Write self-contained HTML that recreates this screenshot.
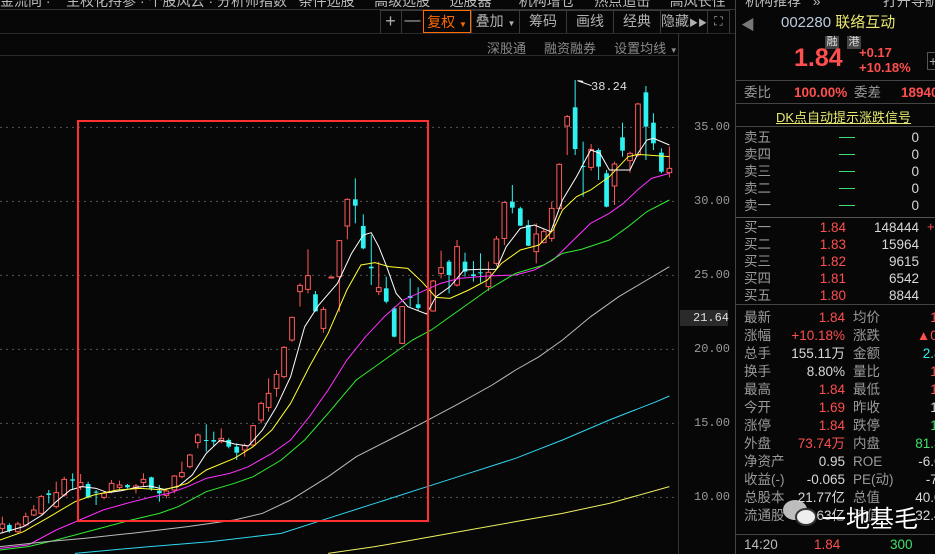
<!DOCTYPE html>
<html><head><meta charset="utf-8"><style>
*{margin:0;padding:0;box-sizing:border-box}
body{width:935px;height:554px;background:#070707;overflow:hidden;position:relative;font-family:"Liberation Sans","Noto Sans CJK SC",sans-serif;color:#a8a8a8}
.a{position:absolute;white-space:nowrap}
.btn{position:absolute;top:10px;height:23px;border-left:1px solid #3a3a3a;font-size:14px;color:#b0b0b0;text-align:center;line-height:22px;white-space:nowrap}
.r{color:#ff4f4f}.g{color:#3fe06b}.w{color:#d8d8d8}.c{color:#2ef2f2}
.row{position:absolute;left:744px;width:200px;font-size:13.5px;height:17px;line-height:17px;white-space:nowrap}
.row span{white-space:nowrap}
.lab{color:#9a9a9a}
</style></head><body>
<div class="a" style="left:0;top:-9px;font-size:14px;color:#bbb;word-spacing:0">金流向 ·&nbsp;&nbsp;&nbsp; 主权化持参 · 个股风云 · 分析师指数&nbsp;&nbsp; 条件选股&nbsp;&nbsp;&nbsp;&nbsp; 高级选股&nbsp;&nbsp;&nbsp;&nbsp; 选股器&nbsp;&nbsp;&nbsp;&nbsp;&nbsp;&nbsp; 机构增仓&nbsp;&nbsp;&nbsp;&nbsp; 热点追击&nbsp;&nbsp;&nbsp;&nbsp; 高风长性&nbsp;&nbsp;&nbsp;&nbsp; 机构推荐&nbsp;&nbsp; »&nbsp;&nbsp;&nbsp;&nbsp;&nbsp;&nbsp;&nbsp;&nbsp;&nbsp;&nbsp;&nbsp;&nbsp;&nbsp;&nbsp;&nbsp; 打开导航&nbsp;&nbsp; 返回</div>
<div class="a" style="left:0;top:9px;width:735px;height:1px;background:#333"></div>
<div class="a" style="left:380px;top:10px;width:350px;height:24px;border:1px solid #3a3a3a"></div>
<div class="btn" style="left:380px;width:21px;border:none;font-size:18px">+</div>
<div class="btn" style="left:401px;width:22px;font-size:16px">—</div>
<div class="btn" style="left:423px;width:48px;border:1px solid #ff6a00;color:#ff6a00">复权 <span style="font-size:8px">▼</span></div>
<div class="btn" style="left:471px;width:48px">叠加 <span style="font-size:8px">▼</span></div>
<div class="btn" style="left:519px;width:47px">筹码</div>
<div class="btn" style="left:566px;width:47px">画线</div>
<div class="btn" style="left:613px;width:47px">经典</div>
<div class="btn" style="left:660px;width:47px">隐藏<span style="font-size:9px">▶▶</span></div>
<div class="btn" style="left:707px;width:22px;font-size:12px">⛶</div>
<div class="a" style="left:0;top:33px;width:735px;height:1px;background:#2a2a2a"></div>
<div class="a" style="left:487px;top:38px;font-size:13px;color:#8a8a8a">深股通&nbsp;&nbsp;&nbsp;&nbsp; 融资融券&nbsp;&nbsp;&nbsp;&nbsp; 设置均线 <span style="font-size:8px">▼</span></div>
<div class="a" style="left:0;top:55px;width:678px;height:1px;background:#2a2a2a"></div>
<div class="a" style="left:678px;top:33px;width:1px;height:521px;background:#333"></div>
<div class="a" style="left:735px;top:0;width:1px;height:554px;background:#444"></div>

<svg class="a" style="left:0;top:60px" width="735" height="494" viewBox="0 0 1568 1482" preserveAspectRatio="none" id="ch"></svg>
<div class="a" style="left:77px;top:120px;width:352px;height:402px;border:2px solid #ff3030"></div>
<div class="a" style="left:0;top:0;font-size:12px;font-family:'Liberation Mono',monospace;color:#999">
<div class="a" style="left:694px;top:120px">35.00</div>
<div class="a" style="left:694px;top:194px">30.00</div>
<div class="a" style="left:694px;top:268px">25.00</div>
<div class="a" style="left:694px;top:342px">20.00</div>
<div class="a" style="left:694px;top:416px">15.00</div>
<div class="a" style="left:694px;top:490px">10.00</div>
<div class="a" style="left:680px;top:310px;width:48px;height:16px;background:#2a2a2a;color:#ddd;padding-left:13px;line-height:16px">21.64</div>
<div class="a" style="left:591px;top:80px;color:#ddd">38.24</div>
</div>

<!-- right panel -->
<div class="a" style="left:741px;top:15px;font-size:14px;color:#777">◀</div>
<div class="a" style="left:781px;top:11px;font-size:15px;color:#bcd"><span>002280</span> <span style="color:#e8e870">联络互动</span></div>
<div class="a" style="left:825px;top:36px;width:14px;height:13px;background:#444;font-size:11px;color:#ddd;text-align:center;line-height:13px">融</div>
<div class="a" style="left:847px;top:36px;width:14px;height:13px;background:#444;font-size:11px;color:#ddd;text-align:center;line-height:13px">港</div>
<div class="a r" style="left:794px;top:44px;font-size:25px;font-weight:bold">1.84</div>
<div class="a r" style="left:859px;top:45px;font-size:13px;font-weight:bold;line-height:15px">+0.17<br>+10.18%</div>
<div class="a" style="left:927px;top:52px;width:12px;height:18px;border:1px solid #555;color:#aaa;font-size:14px;line-height:16px;padding-left:1px">+</div>
<div class="a" style="left:736px;top:80px;width:200px;height:1px;background:#444"></div>
<div class="row" style="top:84px"><span class="lab">委比</span><span class="r" style="position:absolute;left:50px;font-weight:bold">100.00%</span><span class="lab" style="position:absolute;left:110px">委差</span><span class="r" style="position:absolute;left:157px;font-weight:bold">18940</span></div>
<div class="a" style="left:736px;top:103px;width:200px;height:1px;background:#444"></div>
<div class="a" style="left:776px;top:107px;font-size:13px;color:#e8e870;text-decoration:underline">DK点自动提示涨跌信号</div>
<div class="a" style="left:736px;top:126px;width:200px;height:1px;background:#444"></div>
<div id="sell"></div>
<div class="a" style="left:736px;top:217px;width:200px;height:1px;background:#555"></div>
<div id="buy"></div>
<div class="a" style="left:736px;top:304px;width:200px;height:1px;background:#444"></div>
<div id="stats"></div>
<div class="a" style="left:736px;top:534px;width:200px;height:1px;background:#444"></div>
<div class="row" style="top:536px"><span class="lab w" style="color:#bbb">14:20</span><span class="r" style="position:absolute;left:70px">1.84</span><span class="g" style="position:absolute;left:146px">300</span></div>
<div class="a" style="left:783px;top:500px;width:24px;height:20px;border-radius:50%;background:#ddd;opacity:.85"></div>
<div class="a" style="left:795px;top:508px;width:22px;height:18px;border-radius:50%;background:#eee;border:2px solid #333"></div>
<div class="a" style="left:822px;top:499px;font-size:24px;color:#fff;text-shadow:0 0 2px #000">一地基毛</div>
<script>
var s=document.getElementById('ch'),h='';
[202,424,646,868,1090,1312].forEach(function(y){h+='<line x1="0" x2="1447" y1="'+y+'" y2="'+y+'" stroke="#555" stroke-dasharray="2,4" vector-effect="non-scaling-stroke"/>'});
var C=[[5,1392,1405,1370,1420,'r'],[20,1395,1412,1390,1418,'c'],[38,1392,1415,1385,1420,'r'],[55,1370,1395,1358,1400,'r'],[72,1350,1365,1335,1368,'r'],[88,1310,1360,1305,1365,'r'],[104,1300,1305,1290,1330,'c'],[120,1298,1340,1265,1345,'r'],[137,1258,1305,1250,1310,'r'],[155,1258,1262,1240,1290,'c'],[172,1268,1280,1242,1290,'r'],[188,1272,1312,1265,1315,'c'],[205,1295,1298,1290,1335,'c'],[222,1300,1312,1295,1318,'r'],[238,1270,1295,1260,1300,'r'],[255,1275,1282,1262,1290,'r'],[272,1275,1282,1272,1285,'c'],[290,1278,1285,1272,1300,'r'],[306,1258,1268,1240,1280,'r'],[323,1252,1285,1250,1292,'c'],[340,1292,1300,1275,1325,'c'],[355,1293,1306,1288,1315,'r'],[372,1248,1290,1245,1300,'r'],[388,1238,1250,1205,1255,'r'],[405,1185,1220,1182,1225,'r'],[422,1125,1148,1120,1165,'r'],[440,1140,1143,1093,1175,'c'],[456,1140,1145,1115,1160,'c'],[472,1135,1145,1105,1150,'r'],[488,1140,1160,1135,1165,'c'],[505,1160,1178,1150,1200,'c'],[522,1157,1170,1150,1190,'r'],[540,1097,1155,1095,1160,'r'],[557,1030,1080,1025,1090,'r'],[573,1000,1042,955,1055,'r'],[590,943,985,930,1010,'r'],[606,862,950,858,955,'r'],[623,772,840,770,845,'r'],[640,676,695,670,740,'r'],[657,647,688,568,700,'r'],[673,703,754,693,755,'c'],[690,748,805,740,818,'r'],[707,651,654,651,654,'r'],[724,542,650,540,755,'r'],[741,418,498,415,538,'r'],[758,418,437,355,490,'c'],[775,498,565,463,568,'c'],[792,620,625,525,675,'c'],[808,683,695,605,705,'r'],[824,685,725,650,730,'c'],[841,745,830,740,832,'c'],[858,740,850,738,852,'r'],[875,708,714,655,740,'c'],[892,733,744,682,750,'c'],[924,663,753,660,755,'r'],[941,623,640,572,655,'r'],[958,605,645,600,700,'c'],[975,560,675,540,680,'r'],[992,605,635,578,650,'c'],[1010,643,648,603,665,'c'],[1025,637,640,580,668,'c'],[1042,637,680,605,693,'r'],[1059,537,610,528,618,'r'],[1076,427,535,425,555,'r'],[1093,425,443,375,460,'c'],[1110,445,497,440,498,'c'],[1127,495,557,480,558,'c'],[1144,522,575,490,610,'r'],[1160,515,548,508,550,'r'],[1177,445,535,425,545,'r'],[1193,313,445,310,447,'r'],[1210,170,198,165,285,'r'],[1227,142,267,60,285,'c'],[1244,318,320,245,410,'c'],[1261,268,322,252,332,'r'],[1277,270,320,265,360,'c'],[1294,340,440,330,442,'c'],[1311,312,378,305,435,'r'],[1328,232,272,188,290,'c'],[1344,280,302,275,338,'r'],[1361,132,285,128,290,'r'],[1378,97,200,78,300,'c'],[1394,188,250,160,270,'c'],[1411,278,335,265,340,'c'],[1428,325,338,260,352,'r']];
var M=[['#fff','0,1420 50,1400 90,1365 120,1325 150,1290 175,1280 205,1285 230,1298 260,1292 290,1282 320,1278 350,1288 380,1280 410,1245 440,1180 470,1140 500,1152 530,1158 560,1110 590,1040 620,950 650,800 680,735 720,670 750,580 775,525 792,518 808,560 825,620 845,700 870,740 910,762 930,710 960,680 990,630 1020,628 1059,628 1080,560 1110,505 1140,495 1175,515 1200,420 1230,350 1260,270 1280,280 1300,330 1320,330 1344,330 1361,280 1380,240 1394,235 1428,255'],
['#ffff30','0,1440 50,1415 100,1375 160,1325 200,1305 250,1290 300,1285 350,1290 400,1270 440,1230 500,1195 540,1160 580,1110 620,1030 660,920 700,820 740,690 770,615 800,608 830,620 870,625 900,665 930,712 960,715 1000,690 1040,660 1070,610 1110,570 1150,555 1180,510 1200,450 1230,410 1260,390 1300,350 1340,290 1361,283 1380,285 1428,290'],
['#ff30ff','0,1465 60,1455 120,1410 170,1380 220,1350 270,1330 320,1312 360,1300 400,1280 440,1255 490,1240 530,1220 580,1180 620,1140 660,1070 700,990 740,900 780,830 820,770 860,720 900,695 940,670 980,655 1040,648 1100,645 1140,630 1180,600 1220,545 1260,490 1300,460 1330,430 1360,390 1390,355 1428,340'],
['#30ee30','0,1470 60,1460 120,1440 200,1410 280,1380 340,1360 380,1340 440,1295 500,1270 540,1250 600,1200 650,1140 700,1060 760,960 820,900 880,840 920,810 980,750 1040,690 1100,640 1160,615 1200,580 1240,568 1300,540 1340,500 1380,455 1428,420'],
['#bbb','0,1460 100,1445 180,1435 280,1420 400,1400 500,1380 560,1360 620,1320 700,1250 760,1190 830,1140 900,1090 980,1030 1050,975 1100,930 1150,890 1200,840 1260,770 1320,710 1380,660 1428,620'],
['#30d8f0','160,1480 300,1462 450,1445 600,1420 700,1375 800,1330 900,1285 1000,1240 1100,1195 1200,1140 1300,1080 1400,1025 1428,1008'],
['#f0f060','700,1480 800,1460 900,1435 1000,1410 1100,1385 1200,1360 1300,1330 1428,1280']];
C.forEach(function(c){var col=c[5]=='r'?'#ff5a5a':'#2ef2f2';var x=c[0];
h+='<line x1="'+x+'" x2="'+x+'" y1="'+c[3]+'" y2="'+c[4]+'" stroke="'+col+'" vector-effect="non-scaling-stroke"/>';
var bh=Math.max(c[2]-c[1],3);
if(c[5]=='r')h+='<rect x="'+(x-5)+'" y="'+c[1]+'" width="10" height="'+bh+'" fill="#070707" stroke="'+col+'" vector-effect="non-scaling-stroke"/>';
else h+='<rect x="'+(x-5)+'" y="'+c[1]+'" width="10" height="'+bh+'" fill="'+col+'"/>';});
M.forEach(function(m){h+='<polyline points="'+m[1]+'" fill="none" stroke="'+m[0]+'" vector-effect="non-scaling-stroke"/>'});
h+='<polyline points="1262,77 1232,62 1244,64" fill="none" stroke="#fff" vector-effect="non-scaling-stroke"/>';
s.innerHTML=h;
function row(t,a,b,c,cc){return '<div class="row" style="top:'+t+'px"><span class="lab">'+a+'</span><span class="'+cc+'" style="position:absolute;left:52px;width:50px;text-align:right">'+b+'</span><span class="w" style="position:absolute;left:100px;width:75px;text-align:right">'+c+'</span></div>';}
var sh='';['卖五','卖四','卖三','卖二','卖一'].forEach(function(n,i){sh+='<div class="row" style="top:'+(129+i*17)+'px"><span class="lab">'+n+'</span><span style="position:absolute;left:95px;top:8px;width:16px;height:1px;background:#3fe06b"></span><span class="w" style="position:absolute;left:100px;width:75px;text-align:right">0</span></div>'});
document.getElementById('sell').innerHTML=sh;
var bh2='';[['买一','1.84','148444'],['买二','1.83','15964'],['买三','1.82','9615'],['买四','1.81','6542'],['买五','1.80','8844']].forEach(function(r,i){bh2+=row(219+i*17,r[0],r[1],r[2],'r')});
bh2+='<div class="a r" style="left:927px;top:219px;font-size:13px">+</div>';
document.getElementById('buy').innerHTML=bh2;
var S=[['最新','1.84','r','均价','1.8','r'],['涨幅','+10.18%','r','涨跌','▲0.1','r'],['总手','155.11万','w','金额','2.81','c'],['换手','8.80%','w','量比','1.5','r'],['最高','1.84','r','最低','1.6','r'],['今开','1.69','r','昨收','1.6','w'],['涨停','1.84','r','跌停','1.5','g'],['外盘','73.74万','r','内盘','81.37','g'],['净资产','0.95','w','ROE','-6.63','w'],['收益(-)','-0.065','w','PE(动)','-7.7','w'],['总股本','21.77亿','w','总值','40.06','w'],['流通股','17.63亿','w','流值','32.44','w']];
var st='';S.forEach(function(r,i){st+='<div class="row" style="top:'+(309+i*18)+'px"><span class="lab">'+r[0]+'</span><span class="'+r[2]+'" style="position:absolute;left:11px;width:90px;text-align:right">'+r[1]+'</span><span class="lab" style="position:absolute;left:109px">'+r[3]+'</span><span class="'+r[5]+'" style="position:absolute;left:145px;width:60px;text-align:right">'+r[4]+'</span></div>'});
document.getElementById('stats').innerHTML=st;
</script>
</body></html>
